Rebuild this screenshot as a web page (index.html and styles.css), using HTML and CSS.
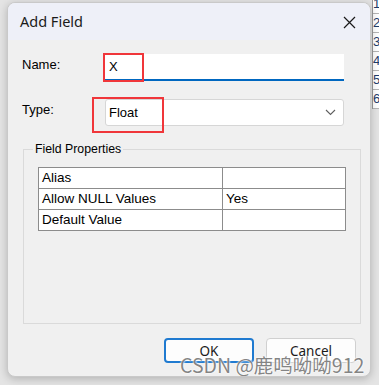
FILE: index.html
```html
<!DOCTYPE html>
<html lang="zh-CN">
<head>
    <meta charset="UTF-8">
    <title>Add Field</title>
    <link rel="stylesheet" href="styles.css">
</head>
<body>
    <div class="desk">
        <div class="dialog">
            <div class="title-bar">
                <span class="title">Add Field</span>
                <svg class="close" width="13" height="13" viewBox="0 0 13 13">
                    <path d="M1 1 L12 12 M12 1 L1 12" stroke="#1a1a1a" stroke-width="1.2" fill="none"/>
                </svg>
            </div>
            <div class="dialog-body">
                <div class="row">
                    <label class="label">Name:</label>
                    <div class="field name-field">
                        <span class="value">X</span>
                        <div class="mark mark-name"></div>
                    </div>
                </div>
                <div class="row row-type">
                    <label class="label">Type:</label>
                    <div class="field type-field">
                        <span class="value">Float</span>
                        <svg class="chevron" width="11" height="7" viewBox="0 0 11 7">
                            <path d="M1 1 L5.5 5.5 L10 1" stroke="#606060" stroke-width="1.1" fill="none"/>
                        </svg>
                        <div class="mark mark-type"></div>
                    </div>
                </div>
                <fieldset class="group">
                    <legend>Field Properties</legend>
                    <table class="props">
                        <tr><td class="key">Alias</td><td></td></tr>
                        <tr><td class="key">Allow NULL Values</td><td>Yes</td></tr>
                        <tr><td class="key">Default Value</td><td></td></tr>
                    </table>
                </fieldset>
                <div class="buttons">
                    <button class="btn btn-ok">OK</button>
                    <button class="btn">Cancel</button>
                </div>
            </div>
            <div class="watermark">CSDN @鹿鸣呦呦912</div>
        </div>
        <div class="side">
            <div class="side-cell first">1</div>
            <div class="side-cell">2</div>
            <div class="side-cell">3</div>
            <div class="side-cell">4</div>
            <div class="side-cell">5</div>
            <div class="side-cell">6</div>
        </div>
    </div>
</body>
</html>
```
FILE: styles.css
```css
body, html {
    margin: 0;
    padding: 0;
    height: 100%;
    overflow: hidden;
    background: #e4e4e4;
    font-family: "Liberation Sans", Arial, sans-serif;
}

.desk {
    display: flex;
    align-items: flex-start;
    height: 100%;
}

.dialog {
    position: relative;
    margin: 2px 0 0 7px;
    width: 365px;
    height: 375px;
    background: #f0f0f0;
    border: 1px solid #c9c9c9;
    box-sizing: border-box;
    border-radius: 8px;
    box-shadow: 0 2px 8px rgba(0, 0, 0, 0.22);
    overflow: hidden;
}

.title-bar {
    display: flex;
    align-items: center;
    justify-content: space-between;
    height: 37px;
    padding: 0 14px 0 12px;
    background: #eef0f8;
}

.title {
    font-family: "Noto Sans", sans-serif;
    font-size: 14.5px;
    color: #1a1a1a;
    margin-top: -2px;
}

.close {
    margin-top: 2px;
}

.dialog-body {
    padding: 14px 0 0 14px;
}

.row {
    display: flex;
    align-items: flex-start;
    height: 27px;
}

.row-type {
    margin-top: 18px;
    height: 26px;
}

.label {
    width: 82px;
    padding-top: 3px;
    font-size: 13px;
    color: #000;
}

.field {
    position: relative;
    box-sizing: border-box;
    width: 240px;
    display: flex;
    align-items: center;
    background: #fff;
    font-size: 13px;
}

.name-field {
    height: 27px;
    border-bottom: 2px solid #0067c0;
    padding-left: 5px;
}

.type-field {
    margin-left: 1px;
    width: 239px;
    height: 27px;
    border: 1px solid #d6d6d6;
    border-radius: 3px;
    padding-left: 3px;
    justify-content: space-between;
    padding-right: 7px;
}

.value {
    color: #000;
}

.mark {
    position: absolute;
    border: 2px solid #f0363a;
    box-sizing: border-box;
}

.mark-name {
    left: -1px;
    top: -1px;
    width: 41px;
    height: 29px;
}

.mark-type {
    left: -14px;
    top: -3px;
    width: 72px;
    height: 36px;
}

.group {
    margin: 17px 13px 0 1px;
    padding: 11px 14px 0 14px;
    height: 182px;
    box-sizing: border-box;
    border: 1px solid #dadada;
}

.group legend {
    padding: 0 2px;
    margin-left: -5px;
    font-size: 12.3px;
    line-height: 14px;
    color: #000;
}

.props {
    width: 308px;
    border-collapse: collapse;
    background: #fff;
    font-size: 13.5px;
}

.props td {
    height: 20px;
    padding: 0 0 0 3px;
    border: 1px solid #8c8c8c;
    line-height: 18px;
    color: #000;
}

.props .key {
    width: 180px;
}

.buttons {
    display: flex;
    justify-content: flex-end;
    gap: 12px;
    margin-top: 14px;
    padding-right: 14px;
}

.btn {
    width: 90px;
    height: 25px;
    background: #fdfdfd;
    border: 1px solid #d0d0d0;
    border-radius: 4px;
    font-family: "Noto Sans", sans-serif;
    font-size: 13.5px;
    color: #1a1a1a;
    padding: 0;
}

.btn-ok {
    border: 2px solid #1f7ad0;
}

.watermark {
    position: absolute;
    left: 172px;
    top: 351px;
    font-family: "Noto Sans CJK SC", "Noto Sans", sans-serif;
    font-size: 19.5px;
    line-height: 22px;
    color: rgba(110, 110, 110, 0.85);
    text-shadow: 0 0 2px #fff, 0 0 2px #fff;
    white-space: nowrap;
}

.side {
    margin-left: 1px;
    width: 6px;
    display: flex;
    flex-direction: column;
    margin-top: -5px;
    background: #fff;
    border-left: 1px solid #9a9a9a;
}

.side-cell {
    height: 18px;
    border-bottom: 1px solid #b5b5b5;
    font-size: 13px;
    line-height: 18px;
    color: #1e3c6a;
    overflow: hidden;
}
```
